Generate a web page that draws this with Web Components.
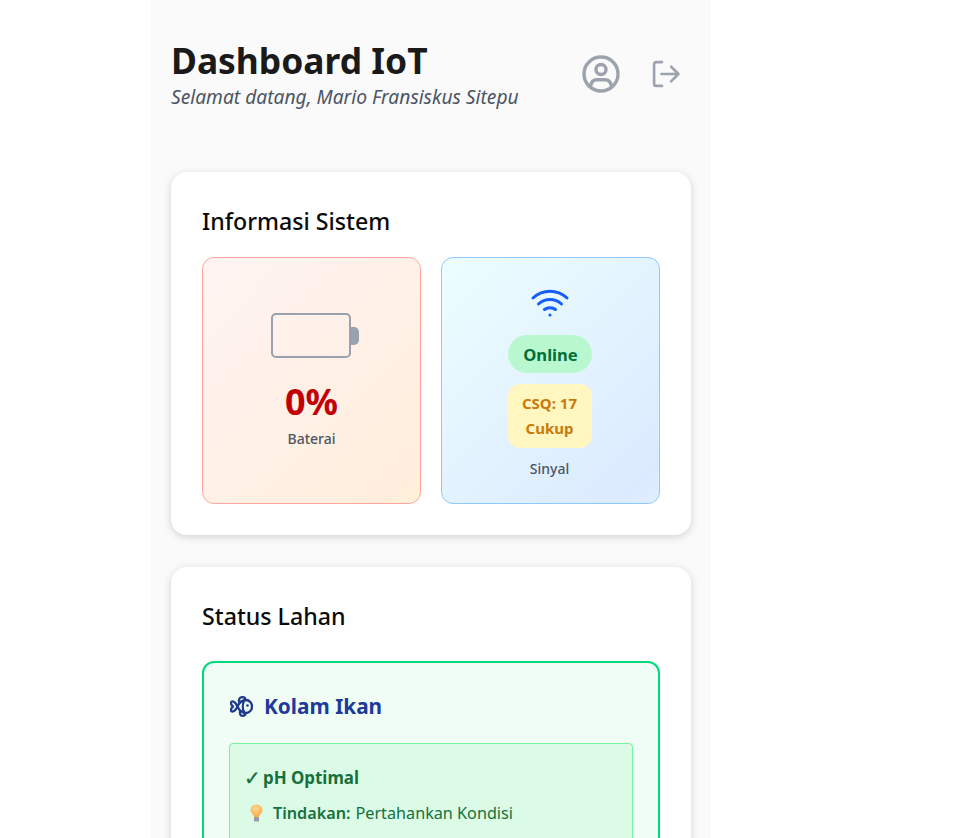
<!DOCTYPE html>
<html lang="id">
<head>
<meta charset="utf-8">
<title>Dashboard IoT</title>
<style>
  html, body { margin: 0; height: 838px; overflow: hidden; background: #fff; font-family: "Noto Sans", sans-serif; }
</style>
</head>
<body>
<iot-app>
  <iot-header title="Dashboard IoT" subtitle="Selamat datang, Mario Fransiskus Sitepu"></iot-header>
  <iot-card heading="Informasi Sistem">
    <iot-stats>
      <battery-tile percent="0%" label="Baterai"></battery-tile>
      <signal-tile status="Online" csq="CSQ: 17" quality="Cukup" label="Sinyal"></signal-tile>
    </iot-stats>
  </iot-card>
  <iot-card heading="Status Lahan">
    <lahan-panel name="Kolam Ikan" status="pH Optimal" action="Pertahankan Kondisi"></lahan-panel>
  </iot-card>
</iot-app>

<script>
const define = (name, html, init) => {
  customElements.define(name, class extends HTMLElement {
    connectedCallback() {
      const root = this.attachShadow({ mode: "open" });
      root.innerHTML = html;
      if (init) init(this, root);
    }
  });
};
const bindText = (el, root) => {
  root.querySelectorAll("[data-t]").forEach((n) => {
    n.textContent = el.getAttribute(n.dataset.t);
  });
};

define("iot-app", `
  <style>
    :host { display: block; width: 520px; height: 838px; margin-left: 151px; padding: 0 20px;
      background: #fafafa; overflow: hidden; }
  </style>
  <slot></slot>`);

define("iot-header", `
  <style>
    :host { display: flex; align-items: center; justify-content: space-between; padding-top: 16px; height: 116px; margin-bottom: 40px; }
    .txt { display: flex; flex-direction: column; padding-top: 2px; }
    h1 { margin: 0; font-size: 35.4px; line-height: 42px; font-weight: 700; color: #1a1a1a; }
    p { margin: 2px 0 0; font-size: 19.2px; line-height: 28px; font-style: italic; color: #4b5563; }
    .icons { display: flex; align-items: center; gap: 28px; padding-right: 8px; }
    svg { display: block; fill: none; stroke: #9ca3af; stroke-linecap: round; stroke-linejoin: round; }
  </style>
  <div class="txt"><h1 data-t="title"></h1><p data-t="subtitle"></p></div>
  <div class="icons">
    <svg width="40" height="40" viewBox="0 0 40 40" stroke-width="3.4">
      <circle cx="20" cy="20" r="17"/>
      <circle cx="20" cy="15.5" r="5"/>
      <path d="M9.5 33 C10 27.5 13 25.8 16 25.8 H24 C27 25.8 30 27.5 30.5 33"/>
    </svg>
    <svg width="34" height="34" viewBox="0 0 30 30" stroke-width="2.3">
      <path d="M11.5 4.500 H6.500 A2 2 0 0 0 4.500 6.500 V23.500 A2 2 0 0 0 6.500 25.500 H11.500"/>
      <path d="M11 15 H26 M19.500 8.500 L26 15 L19.500 21.500"/>
    </svg>
  </div>`, bindText);

define("iot-card", `
  <style>
    :host { display: block; box-sizing: border-box; background: #fff; border-radius: 16px; padding: 31px;
      box-shadow: 0 2px 8px rgba(0,0,0,.16); margin-bottom: 32px; }
    h2 { margin: 0; font-size: 23.2px; line-height: 36px; font-weight: 500; color: #0a0a0a; }
    div { margin-top: 18px; }
  </style>
  <h2 data-t="heading"></h2>
  <div><slot></slot></div>`, bindText);

define("iot-stats", `
  <style>:host { display: grid; grid-template-columns: 1fr 1fr; gap: 20px; }</style>
  <slot></slot>`);

const tileCss = `
  :host { display: flex; flex-direction: column; align-items: center; justify-content: center; box-sizing: border-box;
    height: 247px; border-radius: 12px; border: 1px solid; }
  .label { font-size: 14px; line-height: 20px; font-weight: 500; color: #4b5563; }
`;

define("battery-tile", `
  <style>${tileCss}
    :host { background: linear-gradient(135deg, #fff4f3, #ffeedd 92%, #fff3d6); border-color: #ffa6a0; }
    svg { display: block; margin: 0 0 23px 6px; }
    .value { font-size: 36px; line-height: 40px; font-weight: 700; color: #c10007; margin-bottom: 7px; }
  </style>
  <svg width="88" height="46" viewBox="0 0 88 46">
    <rect x="1" y="1" width="78" height="43" rx="4" fill="none" stroke="#99a1af" stroke-width="2"/>
    <path d="M80 14 H83 A5 5 0 0 1 88 19 V27 A5 5 0 0 1 83 32 H80 Z" fill="#99a1af"/>
  </svg>
  <div class="value" data-t="percent"></div>
  <div class="label" data-t="label"></div>`, bindText);

define("signal-tile", `
  <style>${tileCss}
    :host { background: linear-gradient(135deg, #ecfeff, #dbeafe 92%, #e2f0ff); border-color: #8fc8fa; padding-top: 5px; }
    svg { display: block; margin: 0 2px 16px 0; fill: none; stroke: #155dfc; stroke-linecap: round; stroke-linejoin: round; stroke-width: 3; }
    .pill { width: 84px; box-sizing: border-box; text-align: center; font-weight: 700; margin-right: 2px; }
    .online { background: #b9f8cf; color: #016f3a; font-size: 16.6px; line-height: 24px; padding: 8px 0 6px 2px; border-radius: 19px; margin-bottom: 11px; }
    .csq { background: #fff6c0; color: #c97a0a; font-size: 15px; line-height: 24.5px; padding: 7px 0 8px; border-radius: 12px; margin-bottom: 10px; }
    .label { margin: 1px 2px 0 0; }
  </style>
  <svg width="40" height="32" viewBox="0 0 40 32">
    <path d="M3 11 C13 2 27 2 37 11"/>
    <path d="M8.500 17 C15 11 25 11 31.500 17"/>
    <path d="M14.500 22.500 C17.500 20 22.500 20 25.500 22.500"/>
    <circle cx="20" cy="28" r="1.600" fill="#155dfc" stroke="none"/>
  </svg>
  <div class="pill online" data-t="status"></div>
  <div class="pill csq"><span data-t="csq"></span><br><span data-t="quality"></span></div>
  <div class="label" data-t="label"></div>`, bindText);

define("lahan-panel", `
  <style>
    :host { display: block; margin-top: 27px; border: 2px solid #00d97e; border-radius: 12px; background: #f0fdf4; padding: 25px; height: 300px; }
    .head { display: flex; align-items: center; gap: 11px; margin-bottom: 19px; }
    h3 { margin: 0; font-size: 20.8px; line-height: 36px; font-weight: 700; color: #1e3a9a; }
    .fish { display: block; margin-left: 1px; fill: none; stroke: #1e3a8a; stroke-width: 2.3; stroke-linecap: round; stroke-linejoin: round; }
    .alert { border: 1px solid #7bf1a8; border-radius: 4px; background: #dbfbe6; padding: 14px; color: #15703c; height: 200px; }
    .status { display: flex; align-items: center; font-size: 16.9px; line-height: 40px; font-weight: 700; height: 40px; }
    .check { font-family: "DejaVu Sans", sans-serif; font-weight: 400; font-size: 20px; width: 19px; -webkit-text-stroke: .3px #15703c; }
    .action { display: flex; align-items: center; font-size: 16.2px; line-height: 28px; margin-top: 1px; }
    .action b { font-weight: 600; margin-right: 5px; }
    .bulb { display: block; margin: 0 10px 0 6px; }
  </style>
  <div class="head">
    <svg class="fish" width="23" height="21" viewBox="0 0 23 21">
      <path d="M7.500 10.500 C9.500 6 13 4 16 4 C19.500 4 22 7 22 10.500 C22 14 19.500 17 16 17 C13 17 9.500 15 7.500 10.500 Z"/>
      <path d="M7.500 10.500 C6.500 8 4 5 2 5.500 C0.500 6 0.500 8.500 3 10.500 C0.500 12.500 0.500 15 2 15.500 C4 16 6.500 13 7.500 10.500 Z"/>
      <path d="M9.500 6.500 C8 3.500 9.500 1.200 12.500 1.200 C14.500 1.200 15.500 2.500 15.500 4"/>
      <path d="M10 15.500 C9.500 18 10.500 19.800 12.500 19.800 C14.500 19.800 15.500 18.500 15.500 17"/>
      <path d="M14 5 C12.500 8 12.500 13 14 16"/>
      <circle cx="17.500" cy="9.500" r="1.300" fill="#1e3a8a" stroke="none"/>
    </svg>
    <h3 data-t="name"></h3>
  </div>
  <div class="alert">
    <div class="status"><span class="check">✓</span><span data-t="status"></span></div>
    <div class="action">
      <svg class="bulb" width="13" height="18" viewBox="0 0 13 18">
        <defs><radialGradient id="g" cx="45%" cy="30%" r="60%"><stop offset="0" stop-color="#ffd998"/><stop offset="1" stop-color="#fbb04c"/></radialGradient></defs>
        <path d="M6.500 0.500 C3 0.500 0.500 3 0.500 6 C0.500 8 1.700 9.400 2.900 10.600 C3.600 11.300 4 12 4 13 H9 C9 12 9.400 11.300 10.100 10.600 C11.300 9.400 12.500 8 12.500 6 C12.500 3 10 0.500 6.500 0.500 Z" fill="url(#g)"/>
        <rect x="4" y="13" width="5" height="4.500" rx="0.800" fill="#9b9ba6"/>
      </svg>
      <b>Tindakan:</b><span data-t="action"></span>
    </div>
  </div>`, bindText);
</script>
</body>
</html>
